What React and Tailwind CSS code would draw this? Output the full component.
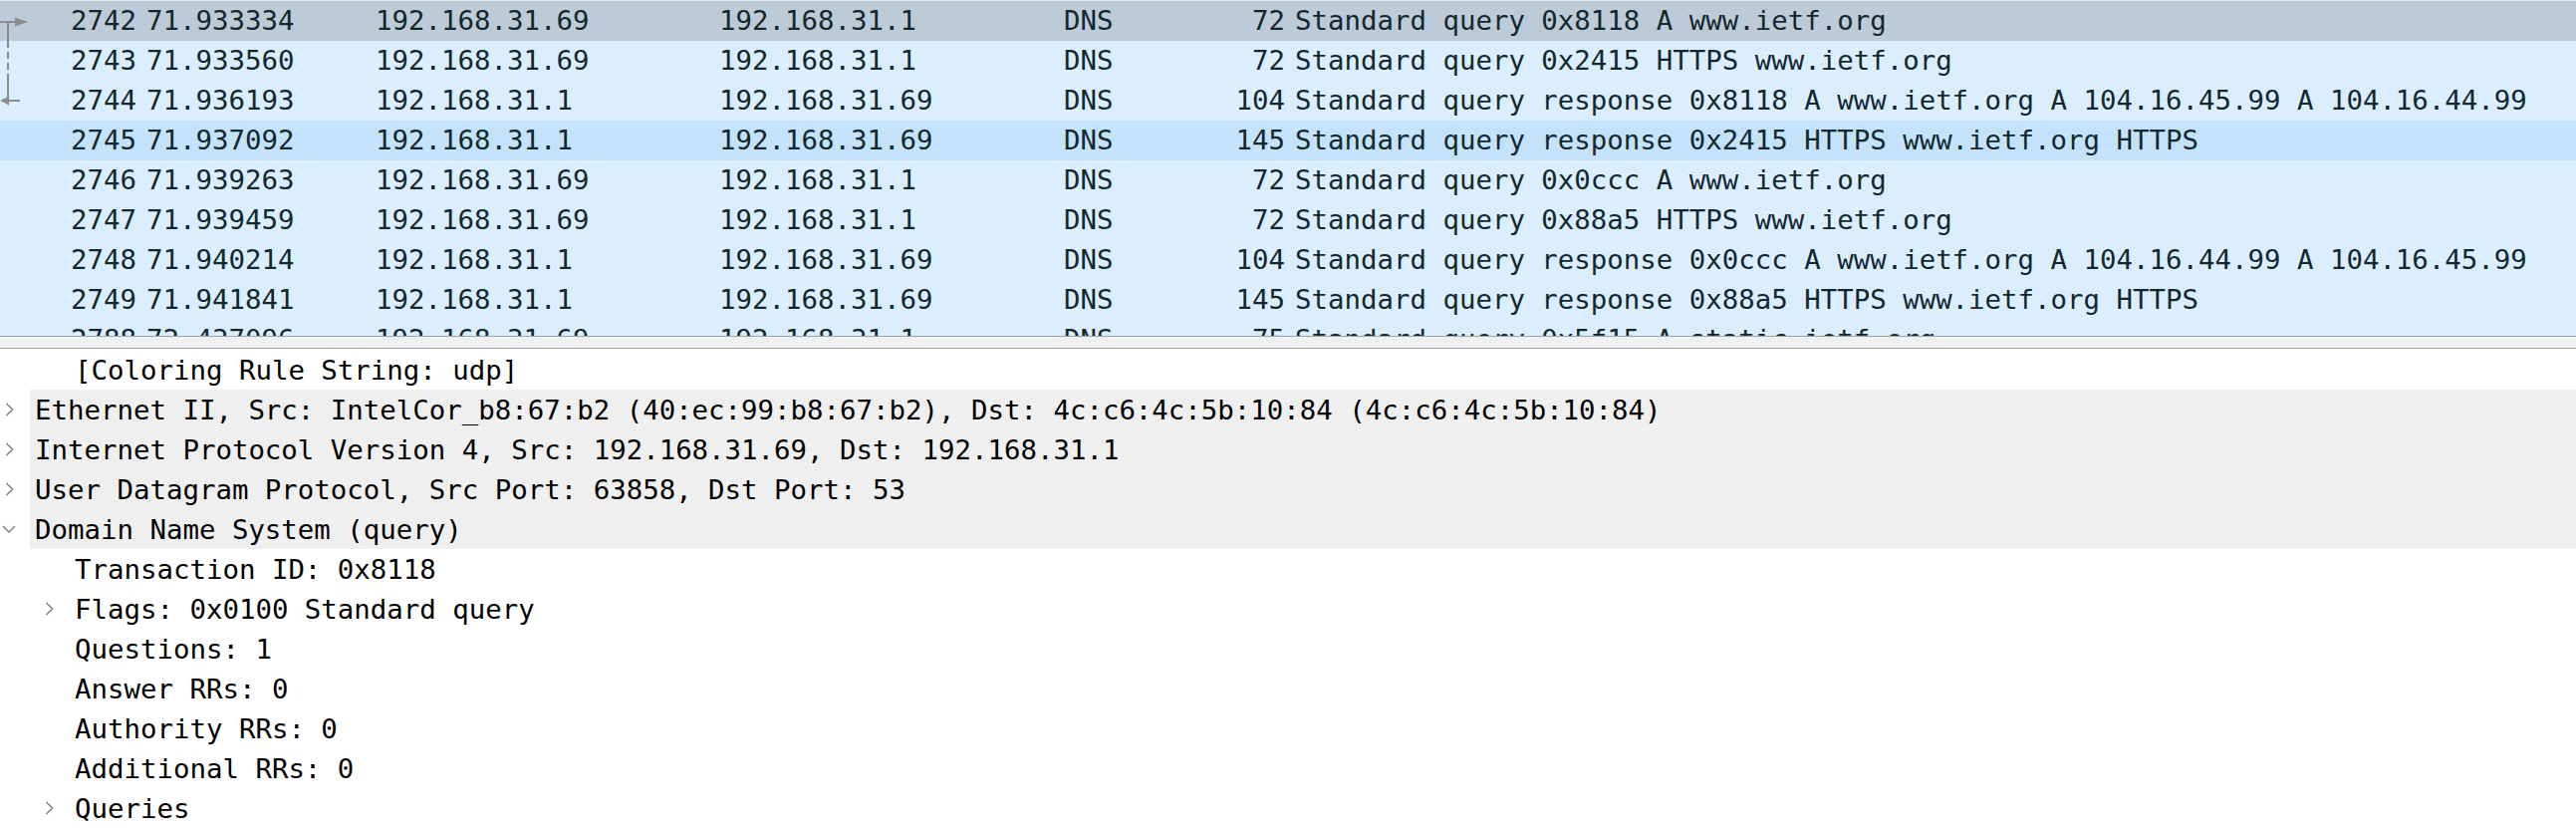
import React from 'react';

const packets = [
    { no: 2742, time: '71.933334', src: '192.168.31.69', dst: '192.168.31.1', proto: 'DNS', len: 72, info: 'Standard query 0x8118 A www.ietf.org', mark: 'req', bg: 'bg-[#bdcbd8]' },
    { no: 2743, time: '71.933560', src: '192.168.31.69', dst: '192.168.31.1', proto: 'DNS', len: 72, info: 'Standard query 0x2415 HTTPS www.ietf.org', mark: 'mid' },
    { no: 2744, time: '71.936193', src: '192.168.31.1', dst: '192.168.31.69', proto: 'DNS', len: 104, info: 'Standard query response 0x8118 A www.ietf.org A 104.16.45.99 A 104.16.44.99', mark: 'resp' },
    { no: 2745, time: '71.937092', src: '192.168.31.1', dst: '192.168.31.69', proto: 'DNS', len: 145, info: 'Standard query response 0x2415 HTTPS www.ietf.org HTTPS', bg: 'bg-[#c5e2fb]' },
    { no: 2746, time: '71.939263', src: '192.168.31.69', dst: '192.168.31.1', proto: 'DNS', len: 72, info: 'Standard query 0x0ccc A www.ietf.org' },
    { no: 2747, time: '71.939459', src: '192.168.31.69', dst: '192.168.31.1', proto: 'DNS', len: 72, info: 'Standard query 0x88a5 HTTPS www.ietf.org' },
    { no: 2748, time: '71.940214', src: '192.168.31.1', dst: '192.168.31.69', proto: 'DNS', len: 104, info: 'Standard query response 0x0ccc A www.ietf.org A 104.16.44.99 A 104.16.45.99' },
    { no: 2749, time: '71.941841', src: '192.168.31.1', dst: '192.168.31.69', proto: 'DNS', len: 145, info: 'Standard query response 0x88a5 HTTPS www.ietf.org HTTPS' },
    { no: 2788, time: '72.437096', src: '192.168.31.69', dst: '192.168.31.1', proto: 'DNS', len: 75, info: 'Standard query 0x5f15 A static.ietf.org' },
];

// level, expander ('right' | 'down' | null), shaded, text
const details = [
    { level: 1, exp: null, text: '[Coloring Rule String: udp]' },
    { level: 0, exp: 'right', shaded: true, text: 'Ethernet II, Src: IntelCor_b8:67:b2 (40:ec:99:b8:67:b2), Dst: 4c:c6:4c:5b:10:84 (4c:c6:4c:5b:10:84)' },
    { level: 0, exp: 'right', shaded: true, text: 'Internet Protocol Version 4, Src: 192.168.31.69, Dst: 192.168.31.1' },
    { level: 0, exp: 'right', shaded: true, text: 'User Datagram Protocol, Src Port: 63858, Dst Port: 53' },
    { level: 0, exp: 'down', shaded: true, text: 'Domain Name System (query)' },
    { level: 1, exp: null, text: 'Transaction ID: 0x8118' },
    { level: 1, exp: 'right', text: 'Flags: 0x0100 Standard query' },
    { level: 1, exp: null, text: 'Questions: 1' },
    { level: 1, exp: null, text: 'Answer RRs: 0' },
    { level: 1, exp: null, text: 'Authority RRs: 0' },
    { level: 1, exp: null, text: 'Additional RRs: 0' },
    { level: 1, exp: 'right', text: 'Queries' },
];

const mono = "font-['DejaVu_Sans_Mono','Liberation_Mono',monospace] text-[27.4px]";

const RelatedMark = ({ kind }) => {
    if (!kind) return null;
    return (
        <svg width="30" height="40" viewBox="0 0 30 40" className="block">
            {kind === 'req' && (
                <g stroke="#8c8c8c" strokeWidth="2" fill="#8c8c8c">
                    <line x1="0" y1="21" x2="17" y2="21" />
                    <line x1="8" y1="21" x2="8" y2="40" />
                    <polygon points="15,16.5 28,21 15,25.5" stroke="none" />
                </g>
            )}
            {kind === 'mid' && (
                <line x1="8" y1="0" x2="8" y2="40" stroke="#8c8c8c" strokeWidth="2" strokeDasharray="7 4" />
            )}
            {kind === 'resp' && (
                <g stroke="#8c8c8c" strokeWidth="2" fill="#8c8c8c">
                    <line x1="8" y1="0" x2="8" y2="20" />
                    <line x1="4" y1="20" x2="20" y2="20" />
                    <polygon points="0,20 9,15.5 9,24.5" stroke="none" />
                </g>
            )}
        </svg>
    );
};

const Chevron = ({ dir }) => {
    if (dir === 'down') {
        return (
            <svg width="14" height="8" viewBox="0 0 14 8" className="block">
                <polyline points="1,1 7,7 13,1" fill="none" stroke="#858585" strokeWidth="1.5" />
            </svg>
        );
    }
    return (
        <svg width="9" height="14" viewBox="0 0 9 14" className="block">
            <polyline points="1.5,1 7.5,7 1.5,13" fill="none" stroke="#858585" strokeWidth="1.5" />
        </svg>
    );
};

const PacketRow = ({ p }) => (
    <div className={`flex h-[40px] items-center leading-[40px] whitespace-nowrap ${p.bg || ''}`}>
        <div className="w-[30px] h-[40px] shrink-0">
            <RelatedMark kind={p.mark} />
        </div>
        <div className="w-[107px] shrink-0 text-right">{p.no}</div>
        <div className="w-[240px] shrink-0 pl-[10px]">{p.time}</div>
        <div className="w-[345px] shrink-0">{p.src}</div>
        <div className="w-[346px] shrink-0">{p.dst}</div>
        <div className="w-[72px] shrink-0">{p.proto}</div>
        <div className="w-[150px] shrink-0 text-right">{p.len}</div>
        <div className="flex-1 pl-[10px]">{p.info}</div>
    </div>
);

const DetailRow = ({ d }) => (
    <div className={`flex h-[40px] leading-[41px] whitespace-nowrap ${d.level === 1 ? 'pl-[40px]' : ''}`}>
        <div className={`w-[30px] shrink-0 flex items-center ${d.exp === 'down' ? 'pl-[2px]' : 'pl-[5px]'}`}>
            {d.exp && <Chevron dir={d.exp} />}
        </div>
        <div className={`flex-1 pl-[5px] ${d.shaded ? 'bg-[#efefef]' : ''}`}>{d.text}</div>
    </div>
);

export default function App() {
    return (
        <div className={`w-[2586px] h-[831px] overflow-hidden bg-white ${mono}`}>
            {/* packet list */}
            <div className="h-[337px] overflow-hidden bg-[#daeeff] text-[#12272e] border-t border-[#e4edf5]">
                {packets.map((p) => (
                    <PacketRow key={p.no} p={p} />
                ))}
            </div>

            {/* splitter */}
            <div className="h-[13px] bg-[#f0f0f0] border-t border-b border-[#a0a0a0]" />

            {/* packet details */}
            <div className="pt-px text-black">
                {details.map((d, i) => (
                    <DetailRow key={i} d={d} />
                ))}
            </div>
        </div>
    );
}
